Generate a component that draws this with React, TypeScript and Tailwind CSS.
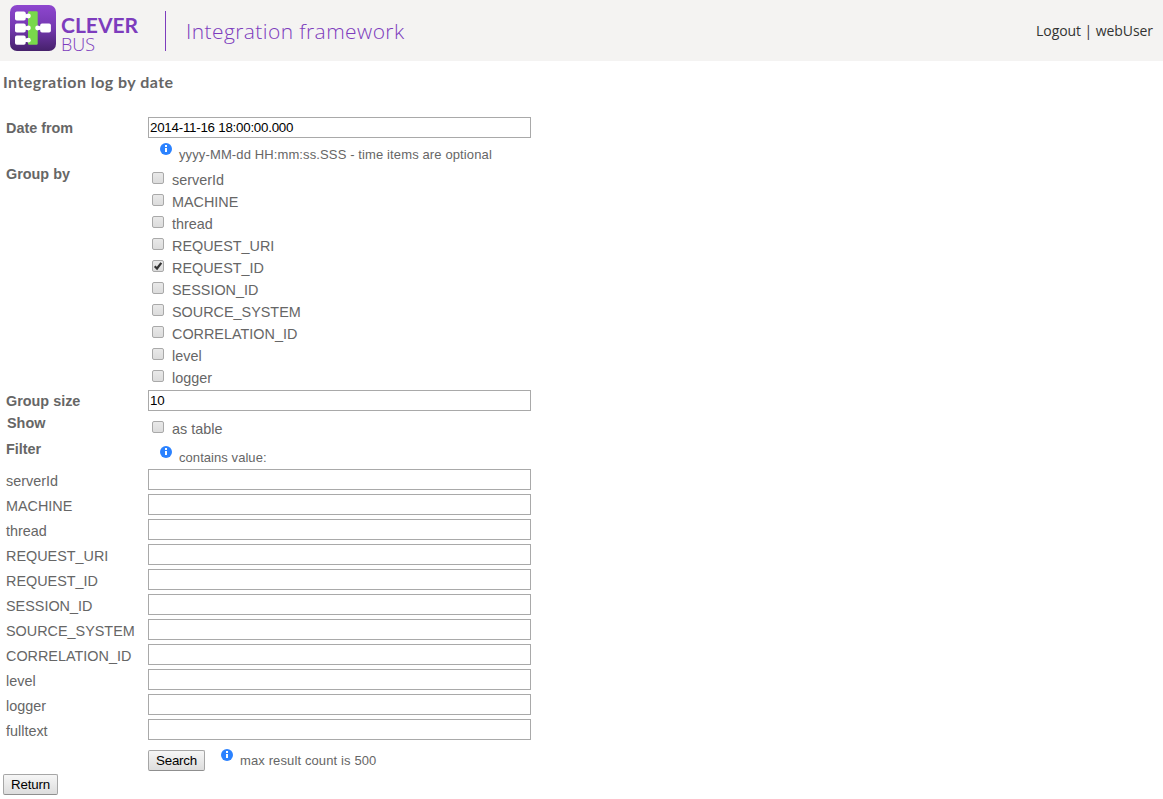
import React from "react";

const groups = [
  "serverId",
  "MACHINE",
  "thread",
  "REQUEST_URI",
  "REQUEST_ID",
  "SESSION_ID",
  "SOURCE_SYSTEM",
  "CORRELATION_ID",
  "level",
  "logger",
];
const filters = [...groups, "fulltext"];

function Logo() {
  return (
    <svg className="ml-[10px] mt-[5px] shrink-0" width="46" height="46" viewBox="0 0 46 46">
      <defs>
        <linearGradient id="tile" x1="0" y1="0" x2="0" y2="1">
          <stop offset="0" stopColor="#8e46cf" />
          <stop offset="0.5" stopColor="#7438b0" />
          <stop offset="1" stopColor="#46216b" />
        </linearGradient>
      </defs>
      <rect width="46" height="46" rx="7" fill="url(#tile)" />
      <rect x="18" y="6.3" width="9.7" height="33.4" rx="1.2" fill="#79d84b" />
      <g fill="#fff">
        {[6.4, 18.4, 30.6].map((y) => (
          <g key={y}>
            <rect x="5" y={y} width="10.7" height="9.2" rx="1.8" />
            <rect x="14.5" y={y + 2.8} width="4" height="3.6" />
            <circle cx="18.4" cy={y + 4.6} r="2.4" />
          </g>
        ))}
        <rect x="30.2" y="18.4" width="10.7" height="9.2" rx="1.8" />
        <rect x="27.4" y="21.2" width="4" height="3.6" />
        <circle cx="27.6" cy="23" r="2.4" />
      </g>
    </svg>
  );
}

function Info({ className = "" }: { className?: string }) {
  return (
    <svg className={`shrink-0 ${className}`} width="12" height="12" viewBox="0 0 12 12">
      <circle cx="6" cy="6" r="6" fill="#2b82ff" />
      <path d="M5 2h2v2H5zM5 5h2v4H5z" fill="#fff" />
    </svg>
  );
}

function Check({ label, checked = false }: { label: string; checked?: boolean }) {
  const [on, setOn] = React.useState(checked);
  return (
    <label className="flex h-[22px] items-start pl-1">
      <input type="checkbox" className="sr-only" checked={on} onChange={() => setOn(!on)} />
      <span className="mt-[3px] h-3 w-3 shrink-0 rounded-[2px] border border-[#a9a9a9] bg-linear-to-b from-[#e9e9e9] to-[#dcdcdc]">
        {on && (
          <svg className="block" width="10" height="10" viewBox="0 0 10 10">
            <path d="M1.7 5.3 4 7.5 8.3 1.8" fill="none" stroke="#333" strokeWidth="2.2" />
          </svg>
        )}
      </span>
      <span className="ml-2 leading-[22px]">{label}</span>
    </label>
  );
}

function Field({ value = "", name }: { value?: string; name: string }) {
  return (
    <input
      aria-label={name}
      defaultValue={value}
      className="block h-[21px] w-[383px] border border-[#a9a9a9] bg-white px-px text-[13.33px] tracking-[-0.24px] text-black outline-none"
    />
  );
}

function Button({ children, className }: { children: string; className: string }) {
  return (
    <button
      className={`h-[21px] rounded-[2px] border border-[#a6a6a6] border-b-[#8f8f8f] bg-linear-to-b from-[#f6f6f6] to-[#dddddd] text-center text-[13.33px] leading-[19px] tracking-[-0.2px] text-black ${className}`}
    >
      {children}
    </button>
  );
}

export default function App() {
  return (
    <div className="h-[799px] w-[1163px] overflow-hidden bg-white font-['Liberation_Sans',sans-serif] text-[14.4px] text-[#666]">
      <header className="flex h-[61px] items-start bg-[#f4f3f2] font-['Open_Sans',sans-serif]">
        <Logo />
        <div className="ml-[5px] mt-[15px] w-[104px] text-[#7d3cbd]">
          <div className="h-5 font-['Lato',sans-serif] text-[21px] font-bold leading-[20px]">
            <span className="inline-block origin-left scale-x-100">CLEVER</span>
          </div>
          <div className="h-[18px] text-[18px] font-light leading-[18px]">
            <span className="inline-block">BUS</span>
          </div>
        </div>
        <div className="mt-[11px] h-10 w-px bg-[#7d3cbd]" />
        <h1 className="ml-5 mt-4 whitespace-nowrap text-[21px] font-light leading-[30px] tracking-[0.41px] text-[#7d3cbd]">
          Integration framework
        </h1>
        <nav className="ml-auto mr-[10px] mt-[21px] whitespace-nowrap text-[14px] leading-5 tracking-[-0.07px] text-[#333]">
          Logout | webUser
        </nav>
      </header>
      <main>
        <h2 className="ml-[3px] mt-[10px] h-[23px] font-['Lato',sans-serif] text-[16px] font-bold leading-[22px] tracking-[0.45px]">
          Integration log by date
        </h2>
        <form className="ml-[6px] mt-[23px]" onSubmit={(e) => e.preventDefault()}>
          <div className="flex h-[52px]">
            <b className="w-[142px] leading-[22px]">Date from</b>
            <div>
              <Field name="Date from" value="2014-11-16 18:00:00.000" />
              <div className="flex pl-3 text-[13px] tracking-[0.12px]">
                <Info className="mt-[5px]" />
                <span className="ml-[7px] mt-[6px] leading-[22px]">
                  yyyy-MM-dd HH:mm:ss.SSS - time items are optional
                </span>
              </div>
            </div>
          </div>
          <div className="flex h-[221px]">
            <b className="-mt-[6px] w-[142px] leading-[22px]">Group by</b>
            <div>
              {groups.map((name) => (
                <Check key={name} label={name} checked={name === "REQUEST_ID"} />
              ))}
            </div>
          </div>
          <div className="flex h-7">
            <b className="w-[142px] leading-[22px]">Group size</b>
            <Field name="Group size" value="10" />
          </div>
          <div className="flex h-6">
            <b className="-mt-[6px] w-[142px] pl-px leading-[22px]">Show</b>
            <Check label="as table" />
          </div>
          <div className="flex h-[27px]">
            <b className="-mt-1 w-[142px] leading-[22px]">Filter</b>
            <div className="flex pl-3 text-[13px] tracking-[0.06px]">
              <Info className="mt-1" />
              <span className="ml-[7px] mt-[5px] leading-[22px]">contains value:</span>
            </div>
          </div>
          {filters.map((name) => (
            <div key={name} className="flex h-[25px]">
              <span className="mt-px w-[142px] leading-[22px]">{name}</span>
              <Field name={name} />
            </div>
          ))}
          <div className="ml-[142px] mt-[6px] flex h-6 items-start">
            <Button className="w-[57px]">Search</Button>
            <Info className="-mt-px ml-4" />
            <span className="ml-[7px] text-[13px] leading-[21px] tracking-[0.12px]">max result count is 500</span>
          </div>
        </form>
        <Button className="ml-[3px] block w-[55px]">Return</Button>
      </main>
    </div>
  );
}
